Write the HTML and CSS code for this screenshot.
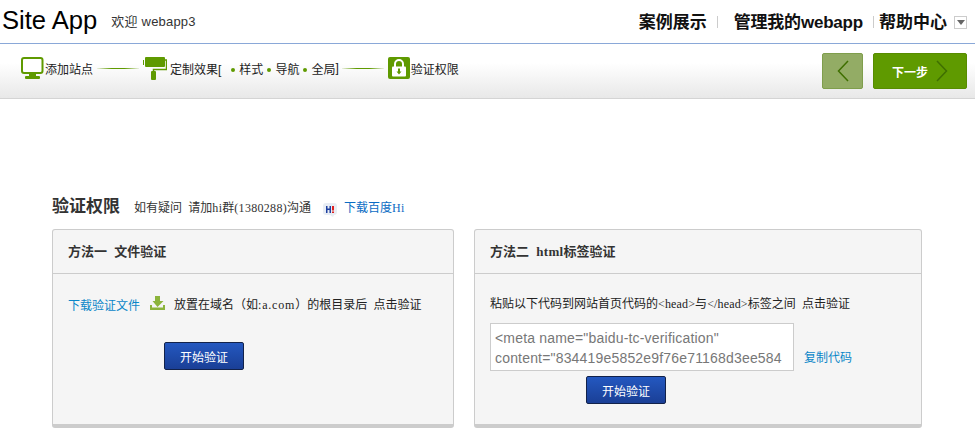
FILE: index.html
```html
<!DOCTYPE html>
<html lang="zh-CN">
<head>
    <meta charset="UTF-8">
    <title>Site App</title>
    <link rel="stylesheet" href="styles.css">
</head>
<body>
    <div class="header">
        <span class="logo">Site App</span>
        <span class="welcome">欢迎 webapp3</span>
        <div class="top-nav">
            <a class="nav-item">案例展示</a>
            <i class="nav-sep sep-one"></i>
            <a class="nav-item nav-manage">管理我的webapp</a>
            <i class="nav-sep sep-two"></i>
            <a class="nav-item">帮助中心</a>
            <span class="nav-drop"><i></i></span>
        </div>
    </div>

    <div class="steps">
        <div class="step-list">
            <svg class="step-icon" width="23" height="22" viewBox="0 0 23 22">
                <rect x="1" y="1" width="20.500" height="15" rx="2" fill="#fff" stroke="#5f9a00" stroke-width="2"/>
                <rect x="8" y="17" width="7" height="2" fill="#5f9a00"/>
                <rect x="4" y="19" width="15" height="3" rx="1" fill="#5f9a00"/>
            </svg>
            <span class="step-text">添加站点</span>
            <i class="step-line line-one"></i>
            <svg class="step-icon roller" width="24" height="23" viewBox="0 0 24 23">
                <rect x="0" y="3" width="1" height="5" fill="#5f9a00"/>
                <rect x="2" y="0" width="20" height="10" rx="1" fill="#5f9a00"/>
                <path d="M22 3h1.500v9.500H10.500V15" fill="none" stroke="#5f9a00" stroke-width="1.500"/>
                <rect x="8" y="14" width="5" height="9" rx="1" fill="#5f9a00"/>
            </svg>
            <span class="step-text custom">定制效果[</span>
            <span class="sub-step first">样式</span>
            <span class="sub-step">导航</span>
            <span class="sub-step">全局</span>
            <span class="step-text bracket">]</span>
            <i class="step-line line-two"></i>
            <svg class="step-icon lock" width="22" height="22" viewBox="0 0 22 22">
                <rect width="22" height="22" rx="2" fill="#5f9a00"/>
                <path d="M7 10V7a4 4 0 0 1 8 0v3" fill="none" stroke="#fff" stroke-width="2"/>
                <rect x="4" y="9.500" width="14" height="10" rx="1" fill="#fff"/>
                <path d="M10 11.500h2v3h1.500L11 17.500l-2.500-3H10z" fill="#5f9a00"/>
            </svg>
            <span class="step-text">验证权限</span>
        </div>

        <div class="step-btns">
            <a class="btn-prev">
                <svg width="12" height="22" viewBox="0 0 12 22"><path d="M11 1L1.500 11 11 21" fill="none" stroke="#3f6f00" stroke-width="1.500"/></svg>
            </a>
            <a class="btn-next">
                <span>下一步</span>
                <svg width="12" height="22" viewBox="0 0 12 22"><path d="M1 1l9.500 10L1 21" fill="none" stroke="#3f6f00" stroke-width="1.500"/></svg>
            </a>
        </div>
    </div>

    <div class="main">
        <div class="title-row">
            <h2>验证权限</h2>
            <span class="tip">如有疑问 请加<span class="latin">hi</span>群<span class="latin">(1380288)</span>沟通</span>
            <svg class="hi-icon" width="14" height="14" viewBox="0 0 14 14">
                <path d="M3 0h8a3 3 0 0 1 3 3v6a3 3 0 0 1-3 3l-1 2-3-2H3a3 3 0 0 1-3-3V3a3 3 0 0 1 3-3z" fill="#e8edf4"/>
                <path d="M3 3h1.500v2.500H6.500V3H8v7H6.500V7H4.500v3H3z" fill="#1d3fa0"/>
                <rect x="9" y="3" width="2" height="4.500" fill="#e02020"/>
                <rect x="9" y="8.500" width="2" height="1.500" fill="#e02020"/>
            </svg>
            <a class="link hi-link">下载百度<span class="latin">Hi</span></a>
        </div>

        <div class="cards">
            <div class="card card-file">
                <div class="card-head">方法一&nbsp;&nbsp;文件验证</div>
                <div class="card-body">
                    <div class="file-row">
                        <a class="link">下载验证文件</a>
                        <svg class="down-icon" width="15" height="14" viewBox="0 0 15 14">
                            <path d="M4 0h5v5h3.500L6.500 11 1.500 5H4z" fill="#8cb43c" transform="translate(1)"/>
                            <path d="M0 9h2v2.500h11V9h2v5H0z" fill="#8cb43c"/>
                        </svg>
                        <span>放置在域名（如<span class="latin domain">:a.com</span>）的根目录后 点击验证</span>
                    </div>
                    <button class="btn-verify file-verify">开始验证</button>
                </div>
            </div>

            <div class="card card-html">
                <div class="card-head">方法二&nbsp;&nbsp;<span class="latin">html</span>标签验证</div>
                <div class="card-body">
                    <p class="paste-tip">粘贴以下代码到网站首页代码的<span class="latin">&lt;head&gt;</span>与<span class="latin">&lt;/head&gt;</span>标签之间 点击验证</p>
                    <div class="code-row">
                        <div class="code-box">&lt;meta name="baidu-tc-verification" content="834419e5852e9f76e71168d3ee584</div>
                        <a class="link">复制代码</a>
                    </div>
                    <button class="btn-verify html-verify">开始验证</button>
                </div>
            </div>
        </div>
    </div>
</body>
</html>
```

FILE: styles.css
```css
html, body {
    height: 435px;
    overflow: hidden;
}
body {
    margin: 0;
    padding: 0;
    background-color: #fff;
    color: #222;
    font-family: "Liberation Sans", "Noto Sans CJK SC", sans-serif;
    font-size: 12px;
}
a {
    cursor: pointer;
}
.latin {
    font-family: "Liberation Serif", "Noto Sans CJK SC", serif;
    letter-spacing: 0.3px;
}
.link {
    color: #0a86c8;
}

.header {
    display: flex;
    align-items: center;
    height: 41px;
    padding: 0 0 2px 2px;
    border-bottom: 1px solid #8aa8d8;
}
.logo {
    font-size: 25.6px;
    color: #000;
}
.welcome {
    margin-left: 14px;
    color: #333;
    font-size: 13px;
    letter-spacing: 0.2px;
}
.top-nav {
    display: flex;
    align-items: center;
    margin-left: auto;
    padding-right: 8px;
}
.nav-item {
    color: #111;
    font-size: 17px;
    font-weight: bold;
}
.nav-manage {
    letter-spacing: -0.2px;
}
.nav-sep {
    width: 1px;
    height: 12px;
    margin-top: 3px;
    background-color: #ccc;
}
.sep-one {
    margin-left: 10px;
    margin-right: 16px;
}
.sep-two {
    margin-left: 10px;
    margin-right: 5px;
}
.nav-drop {
    display: flex;
    align-items: center;
    justify-content: center;
    width: 11px;
    height: 11px;
    margin-left: 7px;
    margin-top: 3px;
    border: 1px solid #ccc;
}
.nav-drop i {
    border-top: 5px solid #666;
    border-left: 4px solid transparent;
    border-right: 4px solid transparent;
}

.steps {
    display: flex;
    align-items: center;
    height: 54px;
    padding-left: 21px;
    background: linear-gradient(#fff 35%, #e8e8e8);
    border-bottom: 1px solid #d4d4d4;
}
.step-list {
    display: flex;
    align-items: center;
    padding-bottom: 6px;
}
.step-icon {
    flex: none;
}
.step-text {
    margin-left: 1px;
    font-size: 12px;
}
.step-text.custom {
    margin-left: 0;
}
.bracket {
    margin-left: 0;
}
.step-line {
    width: 42px;
    height: 1px;
    background: linear-gradient(to right, rgba(95, 154, 0, 0.1), #5f9a00 35%, #5f9a00 65%, rgba(95, 154, 0, 0.1));
}
.line-one {
    margin-left: 4px;
    margin-right: 4px;
}
.line-two {
    margin-left: 3px;
    margin-right: 4px;
}
.roller {
    margin-right: 3px;
}
.sub-step {
    margin-left: 4px;
}
.sub-step::before {
    content: "";
    display: inline-block;
    width: 4px;
    height: 4px;
    margin-right: 4px;
    border-radius: 2px;
    background-color: #5f9a00;
    vertical-align: 2px;
}
.sub-step.first {
    margin-left: 10px;
}

.step-btns {
    display: flex;
    gap: 10px;
    margin-left: auto;
    padding-right: 8px;
}
.btn-prev, .btn-next {
    display: flex;
    align-items: center;
    height: 36px;
    border-radius: 2px;
    box-sizing: border-box;
}
.btn-prev {
    justify-content: center;
    width: 41px;
    background-color: #93ac65;
    border: 1px solid #7f9e4c;
}
.btn-next {
    justify-content: space-between;
    width: 94px;
    padding: 0 18px;
    background-color: #5f9a00;
    border: 1px solid #578c00;
    color: #fff;
    font-weight: bold;
}

.main {
    padding: 93px 53px 0 52px;
}
.title-row {
    display: flex;
    align-items: baseline;
    height: 20px;
    margin-bottom: 17px;
}
.title-row h2 {
    margin: 0;
    color: #333;
    font-size: 17px;
    font-weight: bold;
}
.tip {
    margin-left: 14px;
    color: #333;
    word-spacing: 3px;
}
.hi-icon {
    align-self: center;
    margin-left: 12px;
    margin-top: 16px;
}
.hi-link {
    margin-left: 7px;
    color: #0b6cc4;
}

.cards {
    display: flex;
    gap: 20px;
}
.card {
    height: 199px;
    box-sizing: border-box;
    border: 1px solid #ccc;
    border-bottom: 4px solid #ccc;
    border-radius: 3px;
    background-color: #f5f5f5;
}
.card-file {
    width: 402px;
}
.card-html {
    width: 448px;
}
.card-head {
    height: 43px;
    line-height: 44px;
    padding-left: 15px;
    border-bottom: 1px solid #ccc;
    color: #333;
    font-size: 13px;
    font-weight: bold;
}
.card-body {
    padding: 0 15px;
    word-spacing: 3px;
}
.file-row {
    display: flex;
    align-items: center;
    height: 16px;
    margin-top: 22px;
}
.domain {
    letter-spacing: 0.8px;
}
.down-icon {
    margin-left: 10px;
    margin-right: 9px;
    margin-top: -2px;
}
.paste-tip {
    margin: 22px 0 0;
    line-height: 16px;
}
.paste-tip .latin {
    letter-spacing: 0.15px;
}
.code-row {
    display: flex;
    align-items: center;
    margin-top: 11px;
}
.code-box {
    width: 304px;
    height: 48px;
    box-sizing: border-box;
    padding: 4px;
    overflow: hidden;
    border: 1px solid #ccc;
    background-color: #fff;
    color: #777;
    font-size: 14px;
    line-height: 20px;
    letter-spacing: 0.18px;
    word-spacing: 0;
}
.code-row .link {
    margin-left: 10px;
    margin-top: 18px;
}
.btn-verify {
    display: block;
    width: 80px;
    height: 28px;
    padding: 0;
    border: 1px solid #12224a;
    border-radius: 2px;
    background: linear-gradient(#2458c0, #1a3f96);
    color: #fff;
    font-family: inherit;
    font-size: 12px;
}
.file-verify {
    margin: 30px 0 0 96px;
}
.html-verify {
    margin: 5px 0 0 96px;
}
```
